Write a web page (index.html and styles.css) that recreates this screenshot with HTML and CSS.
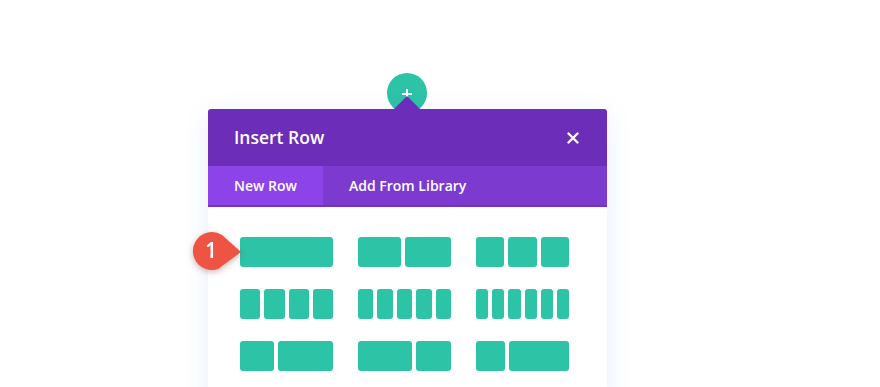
FILE: index.html
```html
<!DOCTYPE html>
<html lang="en">
<head>
    <meta charset="UTF-8">
    <title>Insert Row</title>
    <link rel="stylesheet" href="styles.css">
</head>
<body>
    <div class="stage">
        <div class="addButton">
            <svg width="12" height="12" viewBox="0 0 12 12"><path d="M6 1v10M1 6h10" stroke="#fff" stroke-width="2"/></svg>
        </div>

        <div class="modal">
            <span class="pointer"></span>
            <div class="modalHeader">
                <h1 class="modalTitle">Insert Row</h1>
                <svg class="closeIcon" width="12" height="12" viewBox="0 0 12 12"><path d="M1.5 1.5l9 9M10.5 1.5l-9 9" stroke="#fff" stroke-width="2.4" stroke-linecap="round"/></svg>
            </div>
            <div class="tabs">
                <div class="tab active">New Row</div>
                <div class="tab">Add From Library</div>
            </div>

            <div class="modalBody">
                <div class="badge">
                    <svg width="52" height="40" viewBox="0 0 52 40"><path d="M20 1a19 19 0 1 0 6 37L49 21 30 4A19 19 0 0 0 20 1z" fill="#ee5444"/></svg>
                    <span class="badgeNum">1</span>
                </div>

                <div class="layoutRow">
                    <div class="group"><span class="col" style="flex-grow:1"></span></div>
                    <div class="group"><span class="col" style="flex-grow:43"></span><span class="col" style="flex-grow:45"></span></div>
                    <div class="group"><span class="col"></span><span class="col"></span><span class="col"></span></div>
                </div>
                <div class="layoutRow">
                    <div class="group"><span class="col"></span><span class="col"></span><span class="col"></span><span class="col"></span></div>
                    <div class="group"><span class="col"></span><span class="col"></span><span class="col"></span><span class="col"></span><span class="col"></span></div>
                    <div class="group"><span class="col"></span><span class="col"></span><span class="col"></span><span class="col"></span><span class="col"></span><span class="col"></span></div>
                </div>
                <div class="layoutRow">
                    <div class="group"><span class="col" style="flex-grow:34"></span><span class="col" style="flex-grow:54"></span></div>
                    <div class="group"><span class="col" style="flex-grow:53"></span><span class="col" style="flex-grow:35"></span></div>
                    <div class="group"><span class="col" style="flex-grow:29"></span><span class="col" style="flex-grow:60"></span></div>
                </div>
            </div>
        </div>
    </div>
</body>
</html>
```

FILE: styles.css
```css
body {
    font-family: 'Open Sans', 'Liberation Sans', sans-serif;
    background-color: #fff;
    margin: 0;
    padding: 0;
}

.stage {
    height: 387px;
    box-sizing: border-box;
    overflow: hidden;
    padding: 73px 0 0 208px;
}

.addButton {
    width: 40px;
    height: 40px;
    margin-left: 179px;
    border-radius: 50%;
    background-color: #2cc3a7;
    display: flex;
    justify-content: center;
    padding-top: 15px;
    box-sizing: border-box;
}

.modal {
    position: relative;
    width: 399px;
    margin-top: -4px;
    background-color: #fff;
    border-radius: 3px 3px 0 0;
    box-shadow: 0 4px 24px rgba(60, 130, 230, 0.12);
    height: 300px;
}

.pointer {
    position: absolute;
    top: -13px;
    left: 185px;
    border-left: 14px solid transparent;
    border-right: 14px solid transparent;
    border-bottom: 14px solid #6c2eb8;
}

.modalHeader {
    height: 57px;
    background-color: #6c2eb8;
    border-radius: 3px 3px 0 0;
    display: flex;
    align-items: center;
    justify-content: space-between;
    padding: 0 28px 0 26px;
}

.modalTitle {
    margin: 0;
    color: #fff;
    font-size: 17.5px;
    font-weight: 600;
    padding-bottom: 1px;
}

.tabs {
    display: flex;
    height: 39px;
    background-color: #7c3bce;
    border-bottom: 2px solid #7134c0;
}

.tab {
    color: #fff;
    font-size: 14px;
    font-weight: 600;
    padding: 0 26px;
    line-height: 40px;
}

.tab.active {
    background-color: #8c43e8;
}

.modalBody {
    position: relative;
    padding: 30px 32px 0 32px;
    display: flex;
    flex-direction: column;
    gap: 22px;
}

.layoutRow {
    display: flex;
    gap: 25px;
    height: 30px;
}

.group {
    width: 93px;
    display: flex;
    gap: 4px;
}

.col {
    flex: 1 1 0;
    background-color: #2cc3a7;
    border-radius: 3px;
}

.badge {
    position: absolute;
    top: 24px;
    left: -16px;
    width: 52px;
    height: 40px;
    filter: drop-shadow(0 2px 3px rgba(120, 40, 30, 0.35));
}

.badgeNum {
    position: absolute;
    left: 13px;
    top: 6px;
    color: #fff;
    font-size: 21px;
    font-weight: 600;
    line-height: 26px;
}
```
